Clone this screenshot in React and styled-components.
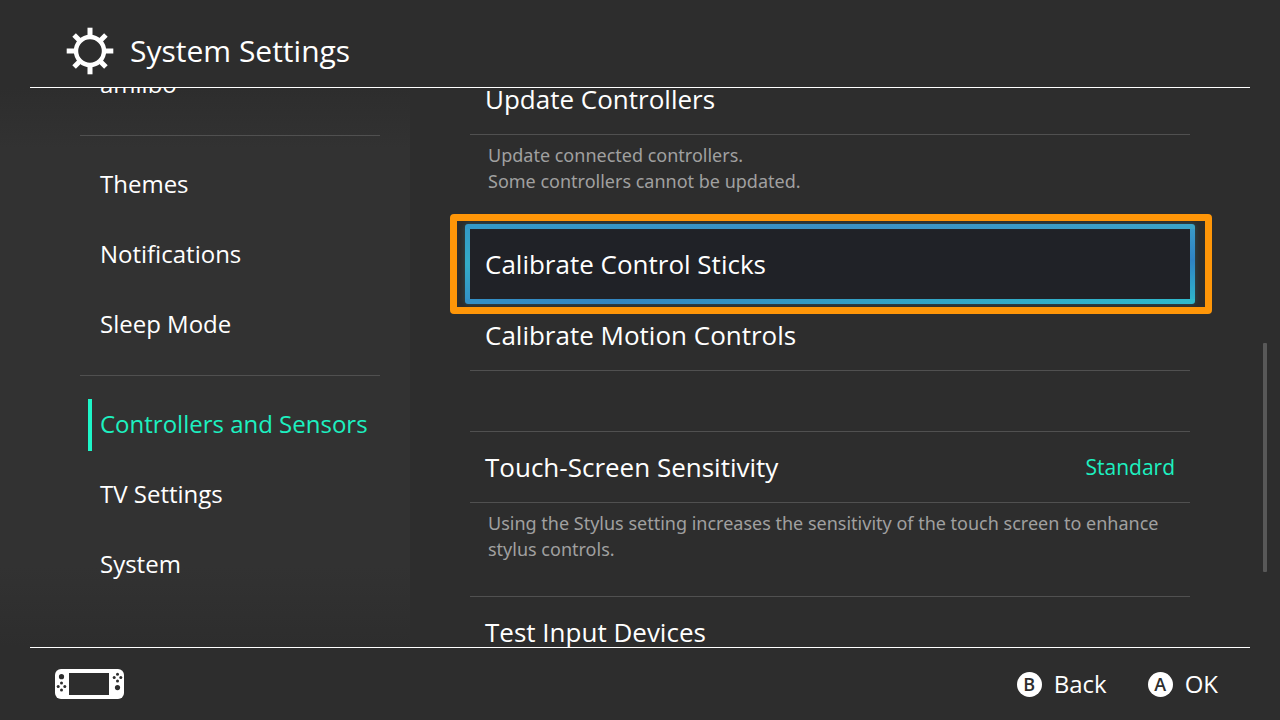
import React, { useLayoutEffect, useRef } from 'react'
import styled, { createGlobalStyle } from 'styled-components'

const GlobalStyle = createGlobalStyle`
* {
  box-sizing: border-box;
}
body {
  margin: 0;
  background-color: #2d2d2d;
  color: #fff;
  font-family: "Open Sans", "Noto Sans", sans-serif;
}
`

const Screen = styled.div`
display: flex;
flex-direction: column;
height: 100vh;
`

const Header = styled.header`
display: flex;
align-items: center;
gap: 16px;
height: 88px;
margin: 0 30px;
padding: 14px 36px 0;
border-bottom: 1px solid #fff;
flex-shrink: 0;
`

const Title = styled.h1`
margin: 0;
font-size: 30px;
font-weight: 400;
`

const Body = styled.div`
display: flex;
flex: 1;
min-height: 0;
`

const Scroller = styled.div`
height: 100%;
overflow-y: auto;
scrollbar-width: none;
`

const Sidebar = styled.nav`
width: 410px;
flex-shrink: 0;
background: linear-gradient(#2d2d2d, #323232 60px, #323232 calc(100% - 80px), #2d2d2d);
`

const MenuGroup = styled.ul`
list-style: none;
margin: 0 30px 0 80px;
padding: 15px 0;

& + & {
  border-top: 1px solid #505050;
  padding-top: 14px;
}

&:first-child {
  padding-top: 0;
}

&:last-child {
  padding-bottom: 47px;
}
`

const MenuItem = styled.li`
display: flex;
align-items: center;
height: 70px;
padding-left: 8px;
`

const MenuLink = styled.a`
display: flex;
align-items: center;
height: 52px;
padding: 0 0 4px 8px;
border-left: 4px solid ${({ $active }) => ($active ? '#1df5c8' : 'transparent')};
color: ${({ $active }) => ($active ? '#1df0c0' : '#fff')};
font-size: 24px;
white-space: nowrap;
text-decoration: none;
`

const Content = styled.main`
flex: 1;
min-width: 0;
`

const ContentScroller = styled(Scroller)`
padding: 0 73px 0 60px;
`

const Section = styled.section`
border-top: 1px solid ${({ $line }) => ($line ? '#505050' : 'transparent')};
`

const Row = styled.button`
position: relative;
display: flex;
align-items: center;
justify-content: space-between;
width: 100%;
height: 71px;
padding: 0 15px;
border: none;
border-bottom: 1px solid #505050;
background-color: ${({ $focused }) => ($focused ? '#202227' : 'transparent')};
color: #fff;
font-family: inherit;
font-size: 26px;
text-align: left;
cursor: pointer;
`

const FocusRing = styled.span`
position: absolute;
inset: -5px;
border-radius: 3px;
background:
  linear-gradient(90deg, #3399c8, #3a8fc4 50%, #3ba3c8) top / 100% 5px no-repeat,
  linear-gradient(90deg, #3390c6, #3385c0 20%, #33a0c4 55%, #2fb9cc) bottom / 100% 5px no-repeat,
  linear-gradient(#3399c8, #33acc8 50%, #3390c6) left / 5px 100% no-repeat,
  linear-gradient(#3b9dc8, #2f83c4 45%, #2fb9cc) right / 5px 100% no-repeat;
box-shadow: 0 0 5px rgba(47, 185, 204, 0.25);
`

const Marker = styled.span`
position: absolute;
inset: -15px -22px -15px -20px;
border: 7px solid #ff9608;
border-radius: 4px;
`

const Value = styled.span`
color: #1df0c0;
font-size: 21px;
`

const Help = styled.p`
margin: 0;
padding: 7px 18px 34px;
color: #a0a0a0;
font-family: "Noto Sans", sans-serif;
font-size: 18px;
line-height: 26px;
`

const Spacer = styled.div`
height: 60px;
`

const ScrollTrack = styled.div`
display: flex;
flex-direction: column;
width: 4px;
margin-right: 13px;
`

const ScrollGap = styled.div`
flex: ${({ $size }) => $size};
`

const ScrollThumb = styled.div`
flex: 229;
border-radius: 1px;
background-color: #585858;
`

const Footer = styled.footer`
display: flex;
align-items: center;
justify-content: space-between;
height: 73px;
margin: 0 30px;
padding: 0 32px 0 25px;
border-top: 1px solid #fff;
flex-shrink: 0;
`

const Actions = styled.div`
display: flex;
gap: 41px;
`

const Action = styled.button`
display: flex;
align-items: center;
gap: 12px;
padding: 0;
border: none;
background: none;
color: #fff;
font-family: inherit;
font-size: 24px;
line-height: 32px;
cursor: pointer;
`

const Key = styled.span`
display: flex;
align-items: center;
justify-content: center;
width: 25px;
height: 25px;
border-radius: 50%;
background-color: #fff;
color: #2d2d2d;
font-size: 18px;
font-weight: 600;
line-height: 25px;
`

const GearIcon = () => (
  <svg width="48" height="48" viewBox="-24 -24 48 48" aria-hidden="true">
    <circle r="14" fill="none" stroke="#fff" strokeWidth="4.4" />
    {[0, 45, 90, 135, 180, 225, 270, 315].map((angle) => (
      <rect
        key={angle}
        x="-2.5"
        y={angle % 90 ? -22.5 : -23.3}
        width="5"
        height="8.5"
        fill="#fff"
        transform={`rotate(${angle})`}
      />
    ))}
  </svg>
)

const ConsoleIcon = () => (
  <svg width="70" height="30" viewBox="0 0 70 30" aria-hidden="true">
    <rect width="69" height="30" rx="6" fill="#fff" />
    <g fill="#2d2d2d">
      <rect x="14" y="4" width="40" height="22" />
      <circle cx="6.5" cy="7.7" r="2.6" />
      <circle cx="6.5" cy="14" r="1.5" />
      <circle cx="6.5" cy="21" r="1.5" />
      <circle cx="3.2" cy="17.5" r="1.5" />
      <circle cx="9.8" cy="17.5" r="1.5" />
      <circle cx="62.5" cy="5.2" r="1.5" />
      <circle cx="62.5" cy="12" r="1.5" />
      <circle cx="59.2" cy="8.6" r="1.5" />
      <circle cx="65.8" cy="8.6" r="1.5" />
      <circle cx="62.5" cy="18.6" r="2.6" />
    </g>
  </svg>
)

const menu = [
  ['amiibo'],
  ['Themes', 'Notifications', 'Sleep Mode'],
  ['Controllers and Sensors', 'TV Settings', 'System'],
]

const App = () => {
  const menuRef = useRef(null)
  const contentRef = useRef(null)

  useLayoutEffect(() => {
    menuRef.current.scrollTop = 38
    contentRef.current.scrollTop = 25
  }, [])

  return (
    <Screen>
      <GlobalStyle />
      <Header>
        <GearIcon />
        <Title>System Settings</Title>
      </Header>
      <Body>
        <Sidebar>
          <Scroller ref={menuRef}>
            {menu.map((items) => (
              <MenuGroup key={items[0]}>
                {items.map((item) => (
                  <MenuItem key={item}>
                    <MenuLink href="#" $active={item === 'Controllers and Sensors'}>{item}</MenuLink>
                  </MenuItem>
                ))}
              </MenuGroup>
            ))}
          </Scroller>
        </Sidebar>
        <Content>
          <ContentScroller ref={contentRef}>
            <Section>
              <Row>Update Controllers</Row>
              <Help>Update connected controllers.<br />Some controllers cannot be updated.</Help>
            </Section>
            <Section>
              <Row $focused>
                <FocusRing />
                <Marker />
                Calibrate Control Sticks
              </Row>
              <Row>Calibrate Motion Controls</Row>
              <Spacer />
            </Section>
            <Section $line>
              <Row>
                Touch-Screen Sensitivity
                <Value>Standard</Value>
              </Row>
              <Help>
                Using the Stylus setting increases the sensitivity of the touch screen to enhance stylus controls.
              </Help>
            </Section>
            <Section $line>
              <Row>Test Input Devices</Row>
            </Section>
          </ContentScroller>
        </Content>
        <ScrollTrack>
          <ScrollGap $size={255} />
          <ScrollThumb />
          <ScrollGap $size={75} />
        </ScrollTrack>
      </Body>
      <Footer>
        <ConsoleIcon />
        <Actions>
          <Action><Key>B</Key>Back</Action>
          <Action><Key>A</Key>OK</Action>
        </Actions>
      </Footer>
    </Screen>
  )
}

export default App
